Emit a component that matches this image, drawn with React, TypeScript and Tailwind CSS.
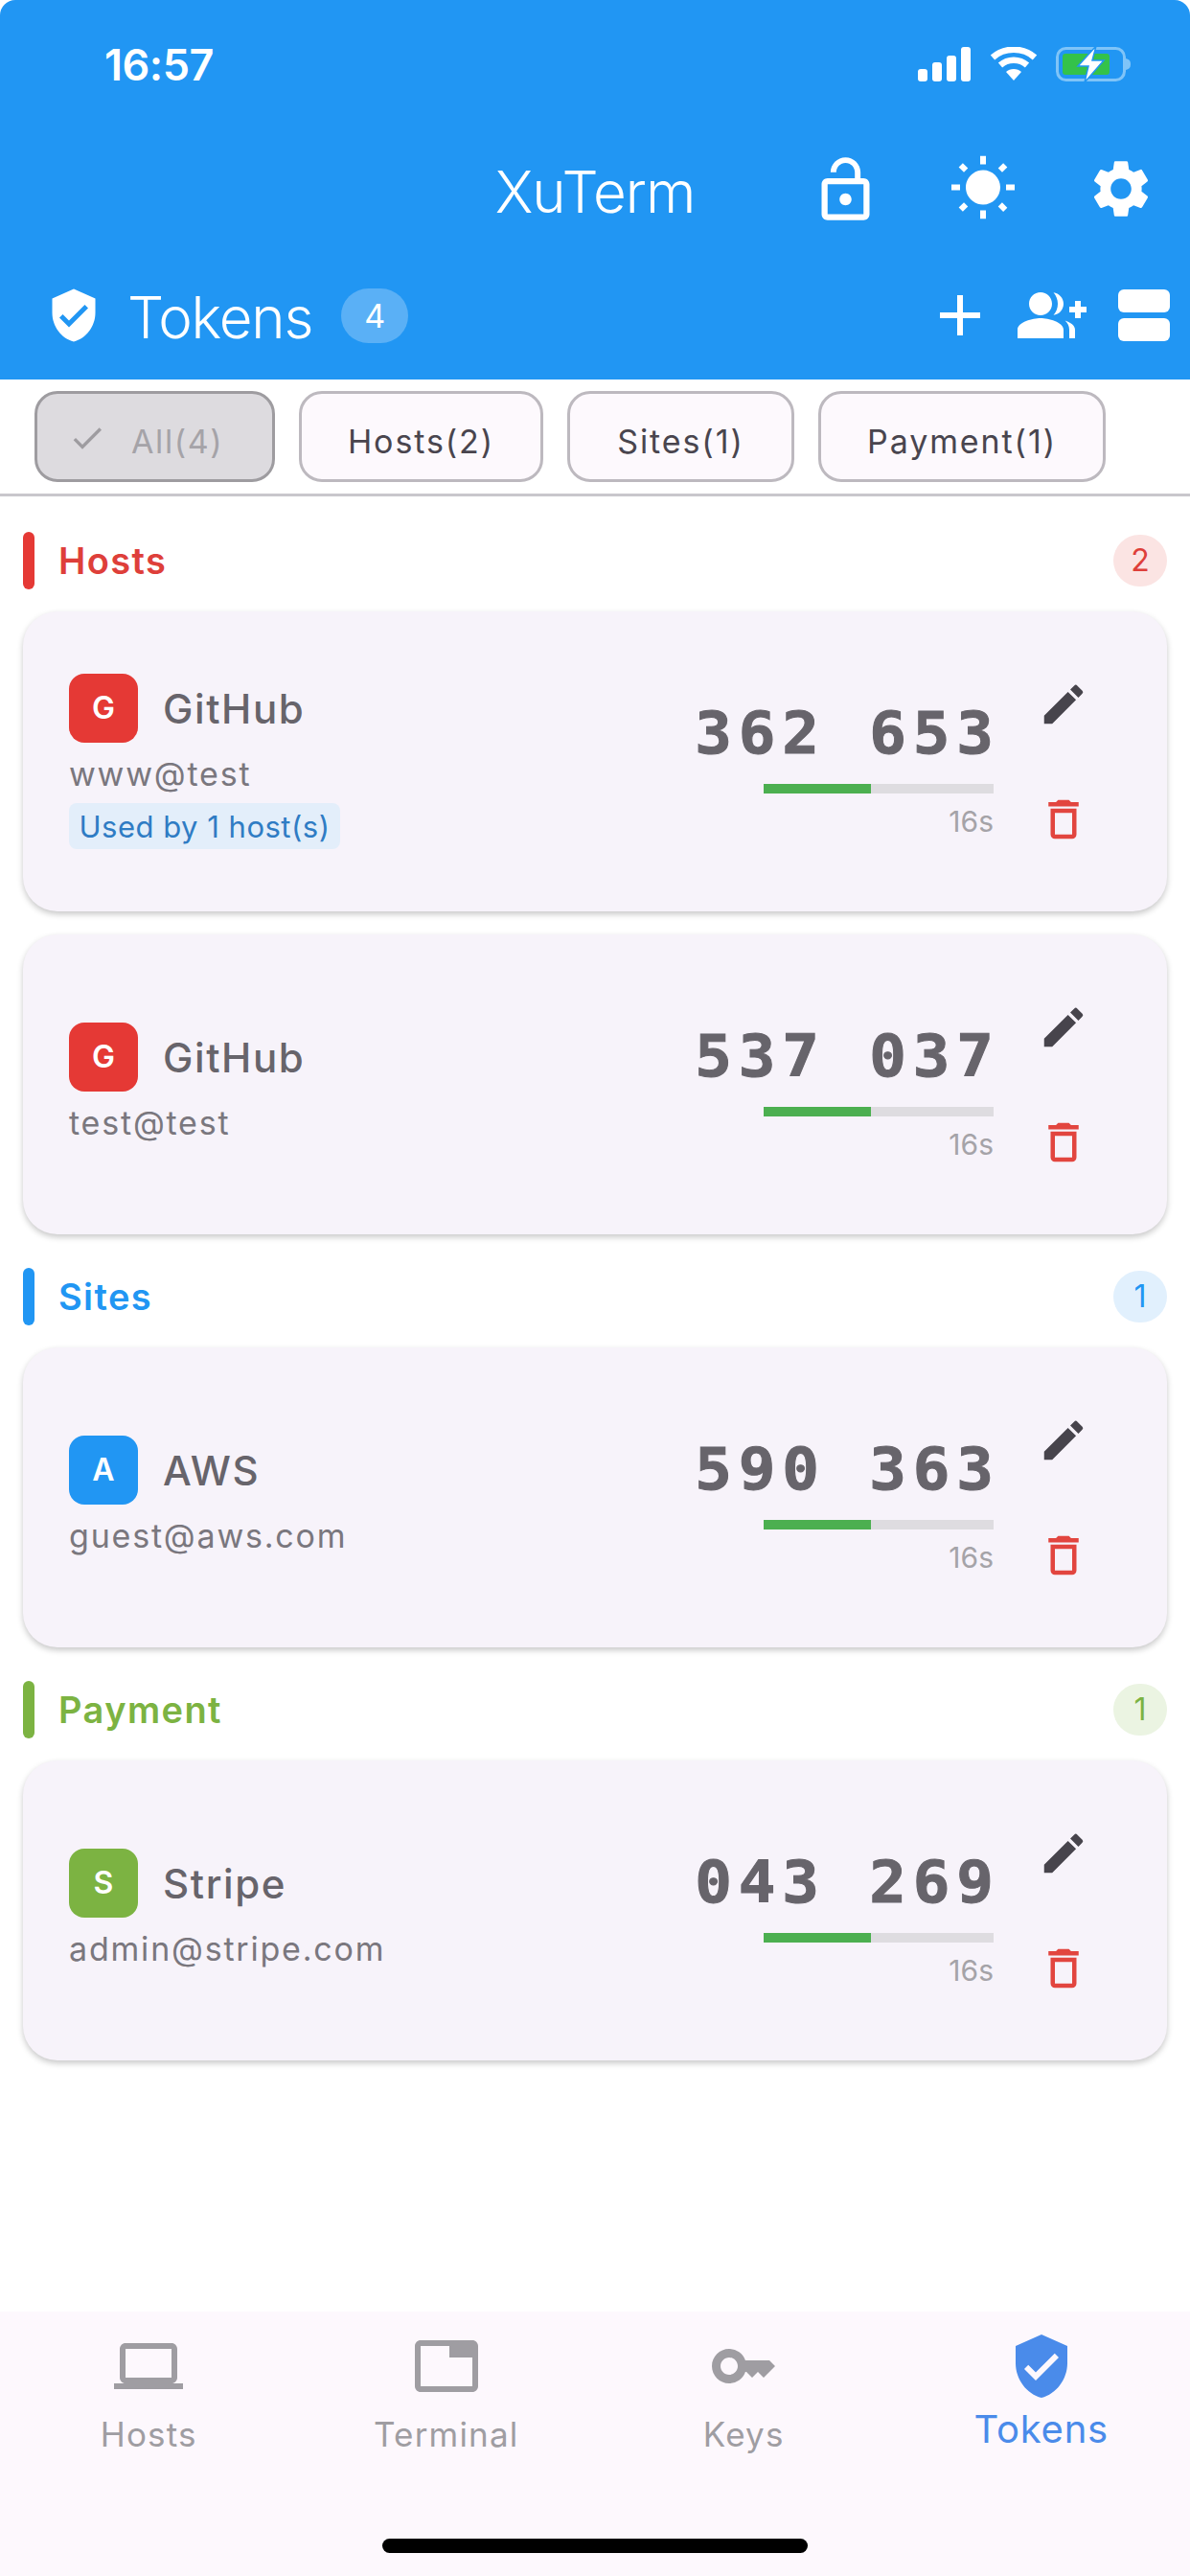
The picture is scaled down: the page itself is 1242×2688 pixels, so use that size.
import React from "react";
import { MdEdit, MdDeleteOutline, MdLaptop, MdTab, MdKey, MdVerifiedUser, MdSettings, MdWbSunny, MdLockOpen, MdAdd, MdCheck } from "react-icons/md";

function GroupAdd() {
  return (
    <svg viewBox="0 0 24 24" className="w-[72px] h-[72px]" fill="white">
      <path d="M22 9V7h-2v2h-2v2h2v2h2v-2h2V9h-2zM8 12c2.21 0 4-1.79 4-4s-1.79-4-4-4-4 1.79-4 4 1.79 4 4 4zm0 1c-2.67 0-8 1.34-8 4v3h16v-3c0-2.66-5.33-4-8-4zm4.51-8.95C13.43 5.11 14 6.49 14 8s-.57 2.89-1.49 3.95C14.47 11.7 16 10.04 16 8s-1.53-3.7-3.49-3.95zm4.02 9.78C17.42 14.66 18 15.7 18 17v3h2v-3c0-1.45-1.59-2.51-3.47-3.17z" />
    </svg>
  );
}

function StatusIcons() {
  return (
    <div className="flex items-center">
      <svg width="56" height="36" viewBox="0 0 56 36" fill="white">
        <rect x="0" y="23" width="10" height="13" rx="3" />
        <rect x="15" y="16" width="10" height="20" rx="3" />
        <rect x="30" y="9" width="10" height="27" rx="3" />
        <rect x="45" y="0" width="10" height="36" rx="3" />
      </svg>
      <svg width="50" height="36" viewBox="0 0 50 36" fill="none" className="ml-[19px]" stroke="white" strokeWidth="6.5">
        <path d="M3 11 C15 0 35 0 47 11" />
        <path d="M11 19 C19 12 31 12 39 19" />
        <path d="M25 35 L17 26 C21 22 29 22 33 26 Z" fill="white" stroke="none" />
      </svg>
      <svg width="80" height="38" viewBox="0 0 80 38" fill="none" className="ml-[19px]">
        <rect x="1.5" y="2.5" width="70" height="33" rx="9" stroke="#7FC4F8" strokeWidth="3" />
        <rect x="7" y="8" width="49" height="22" rx="3" fill="#34C24A" />
        <path d="M73 13 C77 14 78 16 78 19 C78 22 77 24 73 25 Z" fill="#7FC4F8" />
        <path d="M42 0 L23 21 L34 21 L30 38 L50 15 L38 15 Z" fill="white" stroke="#2196F3" strokeWidth="1.5" />
      </svg>
    </div>
  );
}

function Header() {
  return (
    <div className="bg-[#2196F3] text-white rounded-t-[16px]">
      <div className="h-[134px] flex items-center justify-between pl-[109px] pr-[60px]">
        <span className="text-[45px] leading-none font-semibold tracking-[-0.5px]">16:57</span>
        <StatusIcons />
      </div>
      <div className="h-[128px] grid grid-cols-[1fr_auto_1fr] items-center">
        <div />
        <span className="text-[60px] leading-none font-light tracking-[-1px] mt-[3px]">XuTerm</span>
        <div className="flex justify-end">
          <div className="w-[144px] flex justify-center"><MdLockOpen size={75} /></div>
          <div className="w-[144px] flex justify-center"><MdWbSunny size={72} /></div>
          <div className="w-[144px] flex justify-center"><MdSettings size={72} /></div>
        </div>
      </div>
      <div className="h-[134px] flex items-center pl-[47px]">
        <MdVerifiedUser size={60} />
        <span className="ml-[26px] text-[60px] leading-none font-light tracking-[-1.2px] mt-[3px]">Tokens</span>
        <span className="ml-[30px] w-[70px] h-[57px] rounded-full bg-[#5AB0F6] flex items-center justify-center text-[34px]">4</span>
        <div className="ml-auto flex items-center">
          <div className="w-[96px] flex justify-center"><MdAdd size={72} /></div>
          <div className="w-[96px] flex justify-center"><GroupAdd /></div>
          <div className="w-[96px] flex justify-center">
            <div className="flex flex-col gap-[6px]">
              <div className="w-[54px] h-[24px] rounded-[6px] bg-white" />
              <div className="w-[54px] h-[24px] rounded-[6px] bg-white" />
            </div>
          </div>
        </div>
      </div>
    </div>
  );
}

function Chips() {
  const chip = "h-[95px] flex items-center justify-center rounded-[24px] border-[3px] border-[#BDB9BF] bg-[#FDF9FD] text-[34px] text-[#49454E] tracking-[1.9px] pt-[9px]";
  return (
    <div className="h-[122px] border-b-[3px] border-[#C9C7CC] pt-[12px] pl-[36px] flex items-start gap-[25px]">
      <div className="w-[251px] h-[95px] flex items-center rounded-[24px] border-[3px] border-[#9E9CA0] bg-[#DDDBDF] text-[34px] text-[#A5A3A8] tracking-[1.6px] pl-[32px] pt-[9px]">
        <MdCheck size={40} className="text-[#9E9CA0] mt-[-7px]" />
        <span className="ml-[26px]">All(4)</span>
      </div>
      <div className={`w-[255px] ${chip}`}>Hosts(2)</div>
      <div className={`w-[237px] ${chip}`}>Sites(1)</div>
      <div className={`w-[300px] ${chip}`}>Payment(1)</div>
    </div>
  );
}

type Tok = { letter: string; name: string; user: string; code: string; tag?: string; avatar: string };

function Card({ t }: { t: Tok }) {
  return (
    <div className="h-[313px] rounded-[36px] bg-[#F7F3FA] shadow-[0_3px_6px_rgba(0,0,0,0.22)] flex items-center pl-[48px]">
      <div className="flex-1 flex flex-col items-start">
        <div className="flex items-center">
          <div className={`w-[72px] h-[72px] rounded-[16px] flex items-center justify-center text-white text-[32px] font-semibold ${t.avatar}`}>{t.letter}</div>
          <span className="ml-[26px] mt-[2px] text-[42px] leading-[50px] font-medium tracking-[1.6px] text-[#67646B]">{t.name}</span>
        </div>
        <div className="mt-[8px] text-[34px] leading-[50px] tracking-[1.8px] text-[#7A777E]">{t.user}</div>
        {t.tag && (
          <div className="mt-[5px] h-[48px] w-[283px] rounded-[8px] bg-[#E3EEFA] flex items-center justify-center text-[31px] tracking-[0.5px] text-[#2F7CC4] pt-[2px]">{t.tag}</div>
        )}
      </div>
      <div className="flex flex-col items-end pt-[23px]">
        <div className="font-['DejaVu_Sans_Mono',monospace] font-bold text-[60px] leading-[60px] tracking-[6.4px] mr-[-7px] origin-right scale-x-[1.07] text-[#67646B] whitespace-pre [-webkit-text-stroke:1px_#67646B]">{t.code}</div>
        <div className="mt-[23px] w-[240px] h-[10px] bg-[#DEDCE0]">
          <div className="w-[112px] h-[10px] bg-[#4CAF50]" />
        </div>
        <div className="mt-[9px] text-[30px] leading-[40px] text-[#A5A3A8]">16s</div>
      </div>
      <div className="ml-[23px] mr-[58px] w-[100px] flex flex-col items-center gap-[66px]">
        <MdEdit size={54} className="text-[#47444C]" />
        <MdDeleteOutline size={54} className="text-[#E2453F]" />
      </div>
    </div>
  );
}

function Section({ title, count, bar, text, badge, items }: { title: string; count: number; bar: string; text: string; badge: string; items: Tok[] }) {
  return (
    <div className="flex flex-col">
      <div className="h-[60px] flex items-center">
        <div className={`w-[12px] h-[60px] rounded-full ${bar}`} />
        <span className={`ml-[25px] text-[38px] font-semibold tracking-[1.4px] ${text}`}>{title}</span>
        <span className={`ml-auto w-[56px] h-[54px] rounded-full flex items-center justify-center text-[32px] ${badge} ${text}`}>{count}</span>
      </div>
      <div className="mt-[23px] flex flex-col gap-[24px]">
        {items.map((t) => <Card key={t.code} t={t} />)}
      </div>
    </div>
  );
}

function NavItem({ icon, label, active }: { icon: React.ReactNode; label: string; active?: boolean }) {
  return (
    <div className={`flex flex-col items-center ${active ? "text-[#4A8BEA]" : "text-[#9F9DA2]"}`}>
      {icon}
      <span className={active ? "mt-[7px] text-[40px] leading-[46px] tracking-[0.8px]" : "mt-[13px] text-[35px] leading-[44px] tracking-[1.2px]"}>{label}</span>
    </div>
  );
}

export default function App() {
  return (
    <div className="w-[1242px] h-[2688px] bg-white flex flex-col font-[Inter,'Noto_Sans',sans-serif]">
      <Header />
      <Chips />
      <div className="flex-1 px-[24px] pt-[37px] flex flex-col gap-[35px]">
        <Section title="Hosts" count={2} bar="bg-[#E53935]" text="text-[#DE3F3A]" badge="bg-[#FBE4E3]" items={[
          { letter: "G", name: "GitHub", user: "www@test", code: "362 653", tag: "Used by 1 host(s)", avatar: "bg-[#E53935]" },
          { letter: "G", name: "GitHub", user: "test@test", code: "537 037", avatar: "bg-[#E53935]" },
        ]} />
        <Section title="Sites" count={1} bar="bg-[#2196F3]" text="text-[#2196F3]" badge="bg-[#E1F0FD]" items={[
          { letter: "A", name: "AWS", user: "guest@aws.com", code: "590 363", avatar: "bg-[#2196F3]" },
        ]} />
        <Section title="Payment" count={1} bar="bg-[#7CB342]" text="text-[#7CB342]" badge="bg-[#EBF4E2]" items={[
          { letter: "S", name: "Stripe", user: "admin@stripe.com", code: "043 269", avatar: "bg-[#7CB342]" },
        ]} />
      </div>
      <div className="h-[276px] bg-[#FDF8FD] flex flex-col pt-[21px]">
        <div className="grid grid-cols-4">
          <NavItem icon={<MdLaptop size={72} />} label="Hosts" />
          <NavItem icon={<MdTab size={72} />} label="Terminal" />
          <NavItem icon={<MdKey size={72} />} label="Keys" />
          <NavItem icon={<MdVerifiedUser size={72} />} label="Tokens" active />
        </div>
        <div className="mt-auto mb-[24px] mx-auto w-[444px] h-[15px] rounded-full bg-black" />
      </div>
    </div>
  );
}
